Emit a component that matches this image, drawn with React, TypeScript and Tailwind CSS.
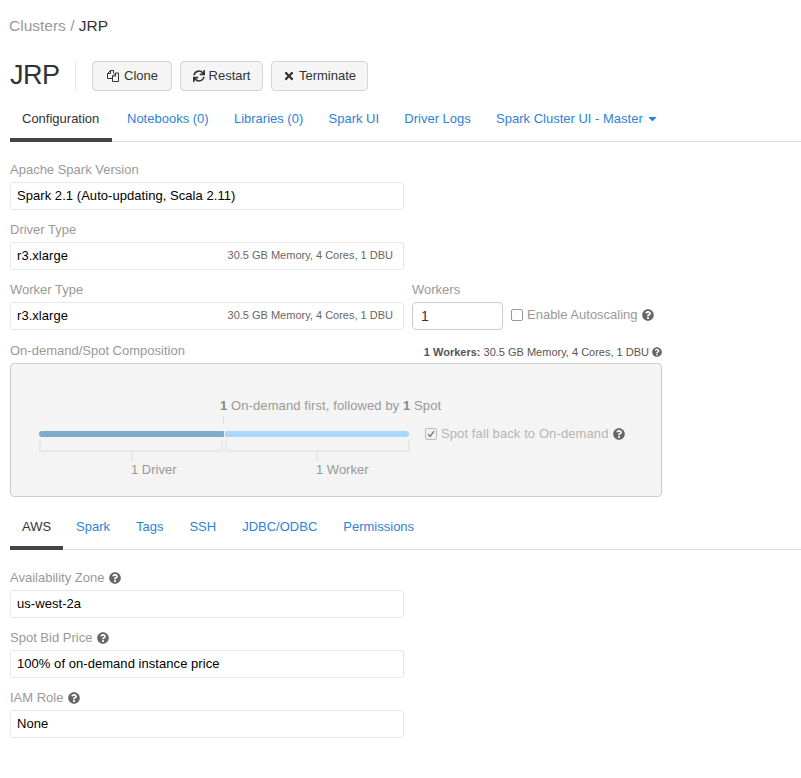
import { FaQuestionCircle, FaSync, FaTimes, FaCaretDown } from "react-icons/fa";

const font = "font-['Liberation_Sans',Arial,sans-serif]";

function Help({ size = "text-[12px]" }: { size?: string }) {
  return <FaQuestionCircle className={`inline-block ${size} text-[#666]`} />;
}

function CloneIcon() {
  return (
    <svg viewBox="0 0 14 14" className="w-[14px] h-[14px]" fill="none" stroke="#333" strokeWidth="1">
      <path d="M7 9.5H1.5V4.5L4.5 1.5H7.5V4" />
      <path d="M4.5 1.5V4.5H1.5" />
      <path d="M6.5 12.5V7L9.5 4H12.5V12.5Z" />
      <path d="M9.5 4V7H6.5" />
    </svg>
  );
}

function Btn({ icon, label, w }: { icon: React.ReactNode; label: string; w: string }) {
  return (
    <button className={`${w} h-[30px] flex items-center justify-center gap-[4px] rounded-[4px] border border-[#d5d5d5] bg-[#f5f5f5] pb-[1px] text-[13px] text-[#333]`}>
      {icon}
      <span>{label}</span>
    </button>
  );
}

function Tabs({ items, activeW, gap }: { items: string[]; activeW: string; gap: string }) {
  return (
    <div className="flex border-b border-[#ddd] h-[34px]">
      <div className={`${activeW} h-[34px] border-b-4 border-[#444] pl-[12px] pt-[1px] text-[13px] leading-[20px] text-[#333]`}>{items[0]}</div>
      <div className={`flex ${gap} pt-[1px] text-[13px] leading-[20px] text-[#2f82d6]`}>
        {items.slice(1).map((t) => (
          <span key={t} className="flex items-start gap-[3px]">
            {t}
            {t.endsWith("Master") && <FaCaretDown className="text-[13px] mt-[3px]" />}
          </span>
        ))}
      </div>
    </div>
  );
}

function Input({ value, hint }: { value: string; hint?: string }) {
  return (
    <div className="h-[28px] w-[394px] rounded-[3px] border border-[#e8e8e8] flex items-center justify-between pl-[6px] pr-[10px]">
      <span className="text-[13px] tracking-[0.05px] text-black">{value}</span>
      {hint && <span className="pb-[2px] text-[11px] text-[#666]">{hint}</span>}
    </div>
  );
}

function Field({ label, value, hint, help }: { label: string; value: string; hint?: string; help?: boolean }) {
  return (
    <div className="w-[394px]">
      <div className="h-[21px] text-[13px] leading-[17px] text-[#999] flex items-start gap-[5px]">
        {label}
        {help && <span className="flex mt-[3px]"><Help /></span>}
      </div>
      <Input value={value} hint={hint} />
    </div>
  );
}

export default function App() {
  return (
    <div className={`${font} w-[801px] h-[778px] bg-white overflow-hidden`}>
      <div className="pl-[9px] pt-[17px] h-[61px] text-[15.5px] leading-[18px] text-[#999]">
        Clusters / <span className="text-[#333]">JRP</span>
      </div>

      <div className="flex items-center h-[30px] pl-[10px]">
        <div className="w-[66px] h-[30px] border-r border-[#e8e8e8] text-[27px] leading-[29px] tracking-[-0.5px] text-[#333]">JRP</div>
        <div className="flex gap-[8px] ml-[16px]">
          <Btn w="w-[80px]" label="Clone" icon={<CloneIcon />} />
          <Btn w="w-[83px]" label="Restart" icon={<FaSync className="text-[12px]" />} />
          <Btn w="w-[97px]" label="Terminate" icon={<FaTimes className="text-[12px]" />} />
        </div>
      </div>

      <div className="pl-[10px] mt-[17px]">
        <Tabs
          activeW="w-[102px]"
          gap="gap-[25.25px] ml-[15px]"
          items={["Configuration", "Notebooks (0)", "Libraries (0)", "Spark UI", "Driver Logs", "Spark Cluster UI - Master"]}
        />
      </div>

      <div className="pl-[10px] pt-[19px]">
        <div className="flex flex-col gap-[11px]">
          <Field label="Apache Spark Version" value="Spark 2.1 (Auto-updating, Scala 2.11)" />
          <Field label="Driver Type" value="r3.xlarge" hint="30.5 GB Memory, 4 Cores, 1 DBU" />
          <div className="flex items-start">
            <Field label="Worker Type" value="r3.xlarge" hint="30.5 GB Memory, 4 Cores, 1 DBU" />
            <div className="ml-[8px]">
              <div className="h-[21px] text-[13px] leading-[17px] text-[#999]">Workers</div>
              <div className="flex items-start">
                <div className="w-[91px] h-[28px] rounded-[4px] border border-[#ccc] flex items-center pl-[8px] text-[14px] text-[#333]">1</div>
                <div className="flex items-center ml-[8px] h-[26px] text-[13px] text-[#999]">
                  <span className="w-[12px] h-[12px] rounded-[2px] border border-[#999] bg-white" />
                  <span className="ml-[4px]">Enable Autoscaling</span>
                  <span className="ml-[4px] flex"><Help /></span>
                </div>
              </div>
            </div>
          </div>
        </div>

        <div className="w-[652px] flex items-end justify-between h-[33px]">
          <span className="text-[13px] leading-[17px] pb-[3px] text-[#999] relative -top-[1px]">On-demand/Spot Composition</span>
          <span className="text-[11px] leading-[14px] pb-[3px] text-[#555] flex items-center gap-[3px] relative -top-[1px]">
            <span><b>1 Workers:</b> 30.5 GB Memory, 4 Cores, 1 DBU</span>
            <Help size="text-[10px]" />
          </span>
        </div>

        <div className="w-[652px] h-[134px] rounded-[4px] border border-[#ccc] bg-[#f4f4f4] pl-[28px] pt-[34px]">
          <div className="flex">
            <div className="w-[371px]">
              <div className="pl-[181px] whitespace-nowrap text-[13px] leading-[15px] tracking-[0.1px] text-[#999]">
                <b className="text-[#888]">1</b> On-demand first, followed by <b className="text-[#888]">1</b> Spot
              </div>
              <div className="ml-[184px] w-px h-[8px] mt-[3px] bg-[#e0e0e0]" />
              <div className="flex gap-px h-[6px] mt-[7px]">
                <div className="w-[185px] bg-[#7facc9] rounded-l-[3px] rounded-r-[1px]" />
                <div className="w-[184px] bg-[#a8d8fb] rounded-r-[3px]" />
              </div>
              <div className="flex gap-[2px] mt-[3px]">
                <div className="w-[184px] h-[12px] border-x-2 border-b-2 border-[#e8e8e8]" />
                <div className="w-[185px] h-[12px] border-x-2 border-b-2 border-[#e8e8e8]" />
              </div>
              <div className="flex gap-[2px]">
                <div className="w-[184px] pl-[92px]">
                  <div className="w-[2px] h-[9px] bg-[#e8e8e8]" />
                  <div className="mt-[1px] text-[13px] leading-[16px] text-[#999] whitespace-nowrap">1 Driver</div>
                </div>
                <div className="w-[185px] pl-[91px]">
                  <div className="w-[2px] h-[9px] bg-[#e8e8e8]" />
                  <div className="mt-[1px] text-[13px] leading-[16px] text-[#999] whitespace-nowrap">1 Worker</div>
                </div>
              </div>
            </div>
            <div className="flex items-center h-[16px] mt-[28px] ml-[15px] text-[13px] text-[#b5b5b5]">
              <span className="w-[12px] h-[12px] rounded-[2px] border border-[#bbb] bg-[#f0f0f0] flex items-center justify-center">
                <svg viewBox="0 0 12 12" className="w-[10px] h-[10px]">
                  <path d="M2.5 6.2 L5 9 L9.5 2.5" fill="none" stroke="#777" strokeWidth="1.6" />
                </svg>
              </span>
              <span className="ml-[4px] tracking-[0.1px]">Spot fall back to On-demand</span>
              <span className="ml-[5px] flex"><Help /></span>
            </div>
          </div>
        </div>
      </div>

      <div className="pl-[10px] mt-[19px]">
        <Tabs
          activeW="w-[53px]"
          gap="gap-[26px] ml-[13px]"
          items={["AWS", "Spark", "Tags", "SSH", "JDBC/ODBC", "Permissions"]}
        />
      </div>

      <div className="pl-[10px] pt-[19px] flex flex-col gap-[11px]">
        <Field label="Availability Zone" value="us-west-2a" help />
        <Field label="Spot Bid Price" value="100% of on-demand instance price" help />
        <Field label="IAM Role" value="None" help />
      </div>
    </div>
  );
}
